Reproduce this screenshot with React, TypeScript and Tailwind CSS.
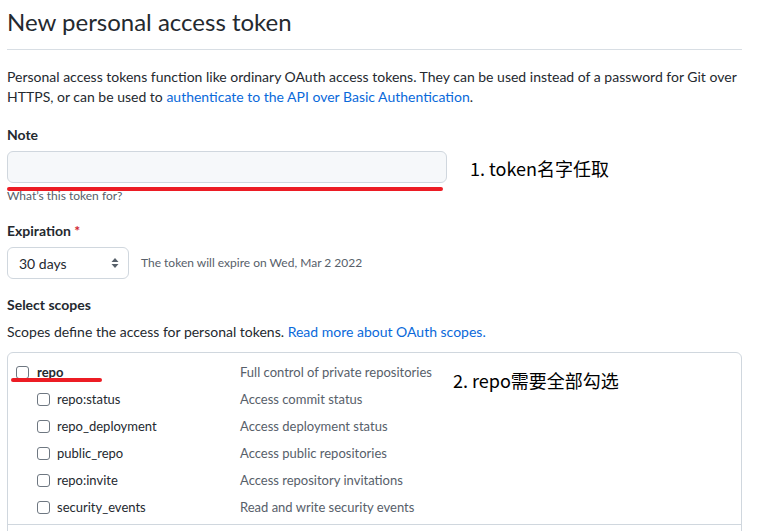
import React from "react";

const font = { fontFamily: 'Lato, "Liberation Sans", sans-serif' };

function Checkbox() {
  return <span className="inline-block w-[13px] h-[13px] rounded-[3px] border border-[#6e7781] bg-white shrink-0" />;
}

const subs: [string, string][] = [
  ["repo:status", "Access commit status"],
  ["repo_deployment", "Access deployment status"],
  ["public_repo", "Access public repositories"],
  ["repo:invite", "Access repository invitations"],
  ["security_events", "Read and write security events"],
];

export default function App() {
  return (
    <div className="relative w-[758px] h-[531px] overflow-hidden bg-white text-[#24292f]" style={font}>
      <div className="pl-[7px] w-[742px]">
        <div className="pt-[7px] pb-[12px] border-b border-[#d8dee4]">
          <h2 className="text-[24px] leading-[30px] font-normal">New personal access token</h2>
        </div>
        <p className="mt-[17px] text-[14px] leading-[20px]">
          Personal access tokens function like ordinary OAuth access tokens. They can be used instead of a password for Git over HTTPS, or can be used to{" "}
          <span className="text-[#0969da]">authenticate to the API over Basic Authentication</span>.
        </p>
        <div className="mt-[18px] text-[14px] leading-[20px] font-bold">Note</div>
        <div className="mt-[6px] w-[440px] h-[32px] rounded-[6px] border border-[#d0d7de] bg-[#f6f8fa]" />
        <div className="mt-[4px] text-[12px] leading-[18px] text-[#57606a]">What’s this token for?</div>
        <div className="mt-[16px] text-[14px] leading-[20px] font-bold">
          Expiration <span className="text-[#cf222e]">*</span>
        </div>
        <div className="mt-[6px] flex items-center">
          <div className="w-[122px] h-[32px] rounded-[6px] border border-[#d0d7de] bg-white flex items-center justify-between pl-[11px] pr-[8px] text-[14px]">
            <span>30 days</span>
            <svg width="10" height="14" viewBox="0 0 10 14">
              <path d="M1.5 6 L5 2 L8.5 6 Z" fill="#57606a" />
              <path d="M1.5 8 L5 12 L8.5 8 Z" fill="#57606a" />
            </svg>
          </div>
          <span className="ml-[12px] text-[12px] text-[#57606a]">The token will expire on Wed, Mar 2 2022</span>
        </div>
        <div className="mt-[16px] text-[14px] leading-[20px] font-bold">Select scopes</div>
        <div className="mt-[7px] text-[14px] leading-[20px]">
          Scopes define the access for personal tokens. <span className="text-[#0969da]">Read more about OAuth scopes.</span>
        </div>
        <div className="mt-[10px] w-[735px] border border-[#d0d7de] rounded-t-[6px]">
          <div className="pt-[6px] pb-[3px] pl-[8px] border-b border-[#d0d7de]">
            <div className="h-[27px] flex items-center">
              <div className="w-[224px] flex items-center gap-[8px]">
                <Checkbox />
                <span className="text-[13px] font-bold">repo</span>
              </div>
              <span className="text-[13px] text-[#57606a]">Full control of private repositories</span>
            </div>
            {subs.map(([n, d]) => (
              <div key={n} className="h-[27px] flex items-center">
                <div className="w-[224px] pl-[21px] flex items-center gap-[7px]">
                  <Checkbox />
                  <span className="text-[13px]">{n}</span>
                </div>
                <span className="text-[13px] text-[#57606a]">{d}</span>
              </div>
            ))}
          </div>
          <div className="h-[27px]" />
        </div>
      </div>
      <div className="absolute left-[7px] top-[187px] w-[436px] h-[4px] rounded-full bg-[#ec1c24]" />
      <div className="absolute left-[11px] top-[378px] w-[91px] h-[4px] rounded-full bg-[#ec1c24]" />
      <div className="absolute left-[470px] top-[156px] text-[18px] leading-[24px] text-black" style={{ fontFamily: '"Noto Sans CJK SC", sans-serif' }}>
        1. token名字任取
      </div>
      <div className="absolute left-[453px] top-[368px] text-[18px] leading-[24px] text-black" style={{ fontFamily: '"Noto Sans CJK SC", sans-serif' }}>
        2. repo需要全部勾选
      </div>
    </div>
  );
}
